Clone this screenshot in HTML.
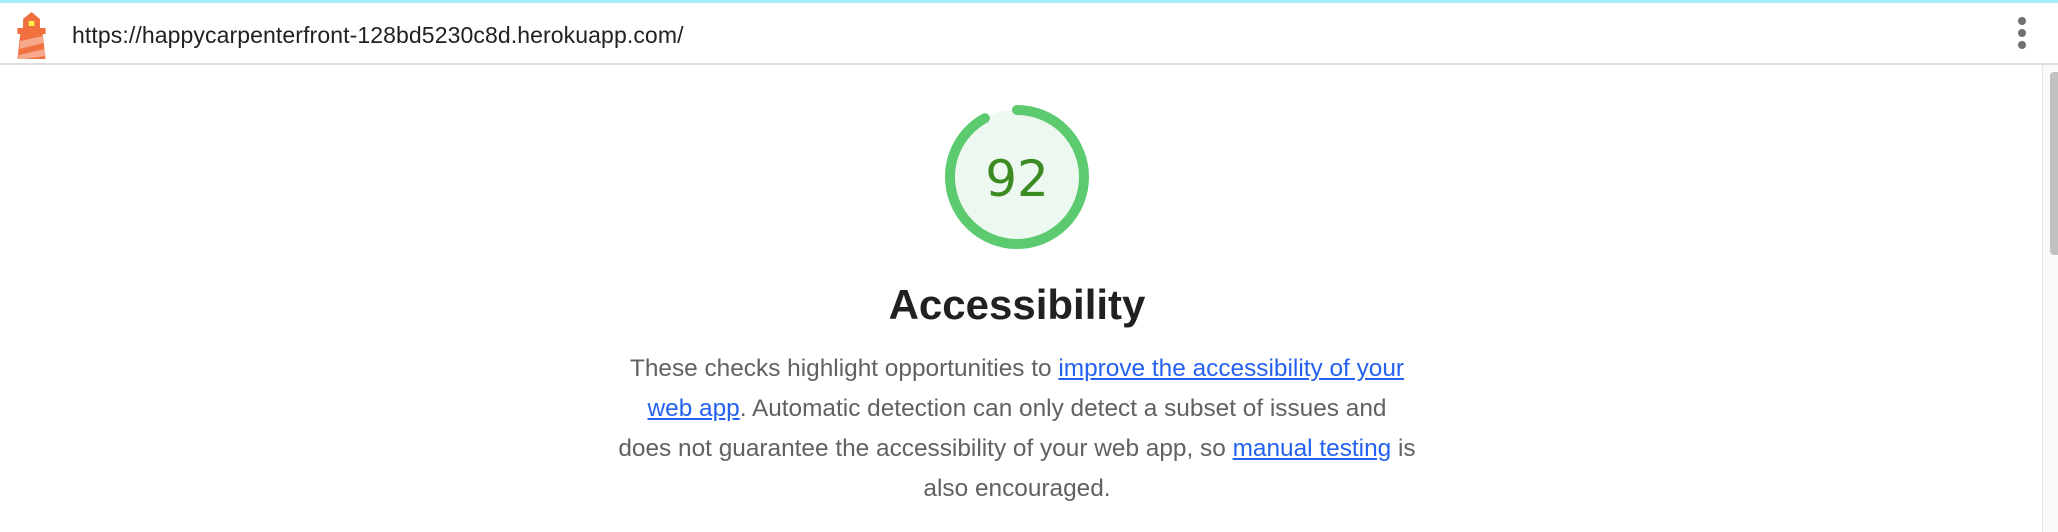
<!DOCTYPE html>
<html><head><meta charset="utf-8"><style>
html,body{margin:0;padding:0;width:2058px;height:532px;overflow:hidden;background:#fff;font-family:"Liberation Sans",Arial,sans-serif;}
.top{position:absolute;left:0;top:0;width:2058px;height:3px;background:#a6ecf4;}
.hdr{position:absolute;left:0;top:3px;width:2058px;height:60px;background:#fff;border-bottom:2px solid #dedede;}
.url{position:absolute;left:72px;top:19px;font-size:23px;color:#202124;letter-spacing:0.1px;}
.dot{position:absolute;left:2018px;width:8px;height:8px;border-radius:50%;background:#6f6f6f;}
.sb{position:absolute;left:2042px;top:65px;width:16px;height:467px;background:#fafafa;border-left:1px solid #e6e6e6;}
.thumb{position:absolute;left:2050px;top:72px;width:8px;height:183px;background:#c1c1c1;border-radius:4px 0 0 4px;}
.title{position:absolute;left:0;width:2034px;text-align:center;top:281px;font-size:42px;font-weight:bold;color:#212121;}
.p{position:absolute;left:0;width:2034px;text-align:center;font-size:24.4px;color:#616161;line-height:40px;}
.p a{color:#2461f0;text-decoration:underline;}
</style></head><body>
<div class="top"></div>
<div class="hdr">
<svg style="position:absolute;left:16px;top:6px" width="31" height="50" viewBox="0 0 22 50" preserveAspectRatio="none">
<polygon points="5,10 11,3 17,10" fill="#f0703f"/>
<rect x="5" y="10" width="12" height="9" fill="#f0703f"/>
<rect x="9" y="12" width="4" height="5" fill="#fff34a"/>
<rect x="1" y="19" width="20" height="6" fill="#f0703f"/>
<polygon points="3,25 19,25 21,51 1,51" fill="#f0703f"/>
<polygon points="3,32 19,27 19.6,34 2.4,40" fill="#f5a88b"/>
<polygon points="1.8,46 20.3,40 21,47 1.5,51" fill="#f5a88b"/>
</svg>
<div class="url">https://happycarpenterfront-128bd5230c8d.herokuapp.com/</div>
<div class="dot" style="top:14px"></div>
<div class="dot" style="top:26px"></div>
<div class="dot" style="top:38px"></div>
</div>
<div class="sb"></div><div class="thumb"></div>
<svg style="position:absolute;left:945px;top:105px" width="144" height="144" viewBox="0 0 144 144">
<circle cx="72" cy="72" r="67" fill="#edf8f0"/>
<circle cx="72" cy="72" r="67" fill="none" stroke="#5ccb70" stroke-width="10" stroke-linecap="round"
 stroke-dasharray="387.3 421" transform="rotate(-90 72 72)"/>
<text x="72" y="91" text-anchor="middle" font-family="DejaVu Sans,Liberation Sans,sans-serif" font-size="50" fill="#3b8a22">92</text>
</svg>
<div class="title">Accessibility</div>
<div class="p" style="top:349px">These checks highlight opportunities to <a>improve the accessibility of your</a></div>
<div class="p" style="top:389px"><a>web app</a>. Automatic detection can only detect a subset of issues and</div>
<div class="p" style="top:429px">does not guarantee the accessibility of your web app, so <a>manual testing</a> is</div>
<div class="p" style="top:469px">also encouraged.</div>
</body></html>
